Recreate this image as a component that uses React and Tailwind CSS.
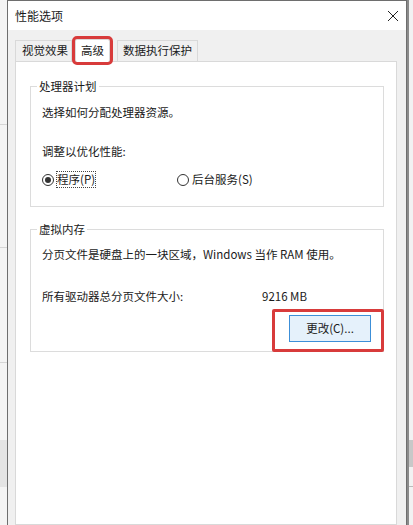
const font = { fontFamily: '"Noto Sans CJK SC", "Microsoft YaHei", sans-serif' };

const GroupBox = ({ title, className, children }) => (
  <div className={`relative border border-[#dcdcdc] ${className}`}>
    <span className="absolute left-[6px] -top-[9px] bg-white px-[2px] text-[11.5px] leading-[16px] text-[#1a1a1a]">{title}</span>
    {children}
  </div>
);

const Radio = ({ checked, label }) => (
  <div className="flex items-center gap-[3px]">
    <span className="flex h-[12px] w-[12px] items-center justify-center rounded-full border border-[#333] bg-white">
      {checked ? <span className="h-[6px] w-[6px] rounded-full bg-[#333]" /> : null}
    </span>
    <span className={`text-[11.5px] leading-[15px] ${checked ? 'outline outline-1 outline-dotted outline-[#444]' : ''}`}>{label}</span>
  </div>
);

export default function App() {
  return (
    <div className="flex h-[525px] w-[413px] overflow-hidden bg-[#f3f3f3] text-[#1a1a1a]" style={font}>
      {/* background window, left */}
      <div className="flex w-[7px] flex-col bg-[#f4f4f4]">
        <div className="h-[125px] border-b border-[#d6d6d6]" />
        <div className="h-[123px] border-b border-[#d6d6d6]" />
        <div className="h-[115px] border-b border-[#d6d6d6]" />
        <div className="h-[77px]" />
        <div className="h-[47px] bg-[#e4e4e4]" />
      </div>

      {/* dialog */}
      <div className="flex w-[400px] flex-col border-x border-t border-[#6e6e6e] bg-[#f0f0f0]">
        <div className="flex h-[29px] items-center justify-between bg-white pl-[7px] pr-[7px]">
          <span className="text-[12px]">性能选项</span>
          <svg width="12" height="12" viewBox="0 0 12 12">
            <path d="M1 1L11 11M11 1L1 11" stroke="#222" strokeWidth="1" />
          </svg>
        </div>

        <div className="flex flex-1 flex-col pl-[7px] pr-[9px] pt-[8px]">
          {/* tabs */}
          <div className="flex h-[23px] items-end">
            <div className="flex h-[21px] items-center border border-b-0 border-[#d9d9d9] bg-[#f0f0f0] pl-[6px] pr-[3px] text-[11.5px]">视觉效果</div>
            <div className="relative z-10 -mb-px ml-[3px] flex h-[23px] items-center rounded-[2px] border-x border-t border-[#d9d9d9] bg-white px-[5px] text-[11.5px] outline outline-[3px] outline-[#d83b3b]">高级</div>
            <div className="ml-[7px] flex h-[21px] items-center border border-b-0 border-[#d9d9d9] bg-[#f0f0f0] px-[5px] text-[11.5px]">数据执行保护</div>
          </div>

          <div className="flex flex-1 flex-col border border-[#d9d9d9] bg-white pl-[14px] pr-[12px] pt-[24px]">
            <GroupBox title="处理器计划" className="h-[121px]">
              <div className="pl-[11px] pt-[17px] text-[11.5px] leading-[16px]">选择如何分配处理器资源。</div>
              <div className="pl-[11px] pt-[23px] text-[11.5px] leading-[16px]">调整以优化性能:</div>
              <div className="flex pl-[11px] pt-[13px]">
                <div className="w-[135px]"><Radio checked label="程序(P)" /></div>
                <Radio label="后台服务(S)" />
              </div>
            </GroupBox>

            <GroupBox title="虚拟内存" className="mt-[22px] h-[123px]">
              <div className="pl-[11px] pt-[16px] text-[11.5px] leading-[16px]">分页文件是硬盘上的一块区域，Windows 当作 RAM 使用。</div>
              <div className="flex pl-[11px] pt-[26px] text-[11.5px] leading-[16px]">
                <span className="w-[220px]">所有驱动器总分页文件大小:</span>
                <span>9216 MB</span>
              </div>
              <div className="-mr-px flex justify-end pt-[5px]">
                <div className="rounded-[2px] border-[3px] border-[#d83b3b] pb-[7px] pl-[14px] pr-[10px] pt-[3px]">
                  <div className="flex h-[27px] w-[82px] items-center justify-center border border-[#3c8fd8] bg-[#e5f1fb] text-[11.5px]">更改(C)...</div>
                </div>
              </div>
            </GroupBox>
          </div>
        </div>
      </div>

      {/* background window, right */}
      <div className="flex w-[6px] flex-col border-l-[2px] border-[#8a8a8a] bg-[#f2f2f2]">
        <div className="h-[440px]" />
        <div className="h-[27px] bg-[#c8c8c8]" />
        <div className="h-[20px] border-b border-[#bbbbbb]" />
      </div>
    </div>
  );
}
